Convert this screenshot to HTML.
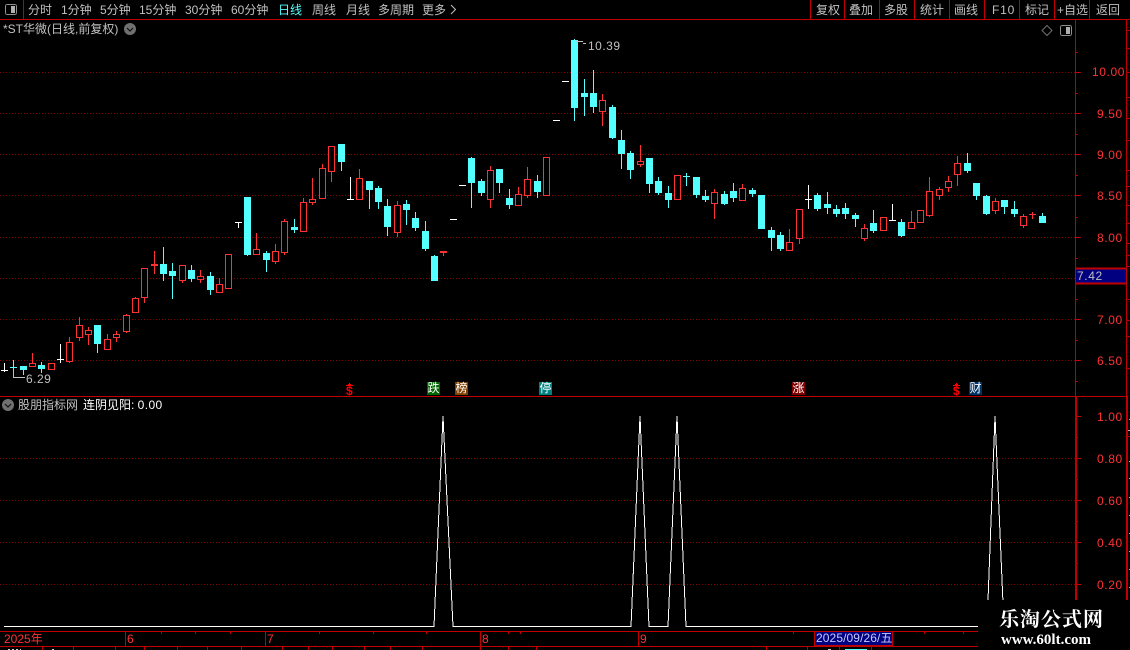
<!DOCTYPE html>
<html><head><meta charset="utf-8"><style>
html,body{margin:0;padding:0;background:#000}
#p{position:relative;width:1130px;height:650px;overflow:hidden;background:#000;font:12px/14px "Liberation Sans","WenQuanYi Zen Hei","Noto Sans CJK SC",sans-serif;color:#c0c0c0}
#p span{position:absolute;white-space:nowrap}
svg{position:absolute;left:0;top:0}
.t{top:3px}
.y{color:#ff3232;left:1092px;letter-spacing:.6px}
.m{width:13px;height:13px;top:382px;color:#fff;text-align:center;line-height:13px}
.d{color:#ff3232;top:632px}
.s{color:#f00;font:bold 12px/12px "Liberation Sans",sans-serif;top:385px}
</style></head><body><div id="p">
<svg width="1130" height="650" shape-rendering="crispEdges" fill="none">
<g stroke="#8a0000" stroke-dasharray="1 2">
<path d="M0 72.5H1075M0 113.5H1075M0 154.5H1075M0 195.5H1075M0 237.5H1075M0 278.5H1075M0 319.5H1075M0 360.5H1075M0 458.5H1075M0 500.5H1075M0 542.5H1075M0 584.5H1075"/>
</g>
<g stroke="#c00000">
<path d="M0 19.5H1130M0 396.5H1126M23.5 0V19M810.5 0V19M844.5 0V19M879.5 0V19M914.5 0V19M949.5 0V19M984.5 0V19M1019.5 0V19M1054.5 0V19M1089.5 0V19"/>
<path d="M1075.5 20V600M1126.5 20V600"/>
<path d="M1076.5 396V600M1127.5 396V600"/>
<path d="M1075 72.5h6M1075 113.5h6M1075 154.5h6M1075 195.5h6M1075 237.5h6M1075 319.5h6M1075 360.5h6M1075 416.5h6M1075 458.5h6M1075 500.5h6M1075 542.5h6M1075 584.5h6"/>
<path d="M1075 52.5h3M1075 93.5h3M1075 134.5h3M1075 175.5h3M1075 217.5h3M1075 258.5h3M1075 299.5h3M1075 340.5h3M1075 381.5h3M1075 437.5h3M1075 479.5h3M1075 521.5h3M1075 563.5h3"/>
<path d="M1127 30.5h3M1127 48.5h3M1127 72.5h3M1127 97.5h3M1127 118.5h3M1127 140.5h3M1127 170.5h3M1127 186.5h3M1127 205.5h3M1127 223.5h3M1127 243.5h3M1127 255.5h3M1127 266.5h3M1127 299.5h3M1127 320.5h3M1127 336.5h3M1127 368.5h3M1127 436.5h3"/>
<path d="M0 631.5H978M0 646.5H978M125.5 631V646M265.5 631V646M480.5 631V646M638.5 631V646M161.5 631v3M195.5 631v3M230.5 631v3M319.5 631v3M373.5 631v3M426.5 631v3M508.5 631v3M520.5 631v3M793.5 631v3M924.5 631v3M963.5 631v3M42.5 646v4M73.5 646v4M115.5 646v4M144.5 646v4M177.5 646v4M207.5 646v4M241.5 646v4M282.5 646v4M308.5 646v4M332.5 646v4M364.5 646v4M390.5 646v4M422.5 646v4M480.5 646v4M508.5 646v4M536.5 646v4M766.5 646v4M807.5 646v4M839.5 646v4M871.5 646v4"/>
</g>
<path stroke="#b0b0b0" d="M1129 419.5h1M1128 430.5h2M1129 461.5h1M1129 478.5h1M1129 497.5h1M1129 515.5h1M1129 533.5h1M1129 551.5h1M1129 569.5h1M1129 587.5h1"/>
<path stroke="#d0d0d0" d="M8 649.5h2M12 649.5h2M16 649.5h2M20 649.5h1M52 649.5h2M828 649.5h3"/>
<path stroke="#54ffff" d="M845 649.5h22"/>
<rect x="1076" y="268" width="50" height="16" fill="#000080"/>
<path d="M1075 268.5H1126M1075 283.5H1126" stroke="#c00000" stroke-width="2"/>
<!-- wicks -->
<g transform="translate(.5,0)">
<path stroke="#ff3232" d="M32 353V367M69 337V363M79 317V341M88 327V345M107 334V349M116 331V342M126 314V333M135 297V313M144 268V303M154 251V274M182 265V283M200 270V283M219 278V292M256 233V254M275 244V264M284 219V255M303 198V231M312 178V205M322 164V198M331 146V182M359 169V199M397 201V237M443 251V256M490 166V208M518 187V205M527 167V198M602 94V126M640 145V167M714 189V219M742 184V201M789 229V251M799 209V244M864 224V241M883 217V231M911 211V228M920 210V223M929 177V217M939 187V200M948 176V192M957 156V186M995 198V214M1023 214V228M1032 212V219"/>
<path stroke="#54ffff" d="M13 360V378M23 366V375M41 362V373M97 325V353M163 247V281M172 263V299M191 265V282M210 272V295M247 197V256M266 251V272M294 219V233M341 144V171M369 181V209M378 186V209M387 199V236M406 200V225M415 212V231M425 221V251M434 255V281M471 157V208M481 179V196M499 169V193M509 189V209M537 175V198M574 39V121M584 79V116M593 70V113M612 105V139M621 130V169M630 151V179M649 158V193M658 177V195M668 186V208M686 173V186M696 177V198M705 190V202M724 191V205M733 183V202M752 188V197M771 227V251M780 232V251M817 193V211M827 192V214M836 205V217M845 203V219M855 213V227M873 210V233M901 219V237M967 153V173M976 183V200M986 195V215M1004 200V214M1014 201V217M1042 213V223"/>
<path stroke="#fff" d="M4 363V372M60 344V363M238 222V228M350 177V200M808 185V209M892 204V221"/>
</g>
<!-- red outlined bodies -->
<g transform="translate(-2.5,.5)" fill="#000" stroke="#ff3232">
<path d="M32 363h6V366h-6zM51 363h6V369h-6zM69 342h6V361h-6zM79 325h6V337h-6zM88 330h6V334h-6zM107 339h6V349h-6zM116 334h6V337h-6zM126 315h6V331h-6zM135 298h6V312h-6zM144 268h6V297h-6zM154 264h6V265h-6zM182 265h6V280h-6zM200 276h6V279h-6zM219 284h6V292h-6zM228 254h6V288h-6zM256 249h6V254h-6zM275 251h6V261h-6zM284 221h6V252h-6zM303 202h6V231h-6zM312 199h6V202h-6zM322 168h6V198h-6zM331 146h6V171h-6zM359 178h6V199h-6zM397 205h6V232h-6zM443 251h6V252h-6zM490 170h6V199h-6zM518 194h6V205h-6zM527 179h6V195h-6zM546 157h6V195h-6zM602 100h6V111h-6zM640 161h6V164h-6zM677 175h6V199h-6zM714 192h6V203h-6zM742 188h6V200h-6zM789 242h6V250h-6zM799 209h6V238h-6zM864 228h6V238h-6zM883 217h6V230h-6zM911 222h6V228h-6zM920 210h6V222h-6zM929 191h6V215h-6zM939 189h6V195h-6zM948 181h6V187h-6zM957 163h6V174h-6zM995 201h6V210h-6zM1023 216h6V225h-6z"/>
</g>
<path stroke="#ff3232" d="M1029 214.5h7"/>
<!-- cyan filled bodies -->
<g transform="translate(-3,0)" fill="#54ffff">
<path d="M23 366h7V370h-7zM41 365h7V369h-7zM97 325h7V344h-7zM163 264h7V274h-7zM172 271h7V276h-7zM191 270h7V279h-7zM210 276h7V290h-7zM247 197h7V255h-7zM266 253h7V260h-7zM294 227h7V230h-7zM341 144h7V162h-7zM369 181h7V190h-7zM378 188h7V202h-7zM387 206h7V227h-7zM406 204h7V210h-7zM415 218h7V228h-7zM425 231h7V249h-7zM434 256h7V281h-7zM471 158h7V183h-7zM481 181h7V193h-7zM499 169h7V183h-7zM509 198h7V205h-7zM537 181h7V192h-7zM574 40h7V108h-7zM584 93h7V97h-7zM593 93h7V107h-7zM612 107h7V138h-7zM621 140h7V154h-7zM630 153h7V170h-7zM649 158h7V184h-7zM658 181h7V193h-7zM668 193h7V200h-7zM696 177h7V195h-7zM705 196h7V200h-7zM724 194h7V204h-7zM733 191h7V198h-7zM752 190h7V194h-7zM761 195h7V229h-7zM771 230h7V238h-7zM780 235h7V249h-7zM817 195h7V209h-7zM827 204h7V208h-7zM836 209h7V214h-7zM845 208h7V214h-7zM855 215h7V219h-7zM873 223h7V231h-7zM901 222h7V236h-7zM967 163h7V171h-7zM976 183h7V196h-7zM986 196h7V214h-7zM1004 200h7V207h-7zM1014 209h7V214h-7zM1042 216h7V223h-7z"/>
</g>
<path stroke="#54ffff" d="M10 367.5h7M683 176.5h7"/>
<path stroke="#fff" d="M1 370.5h7M57 359.5h7M235 222.5h7M347 199.5h7M450 219.5h7M459 185.5h7M553 120.5h7M562 81.5h7M805 199.5h7M889 220.5h7"/>
<!-- labels arrows -->
<path stroke="#c0c0c0" d="M13.5 370V378M14 377.5H25M576 41.5h7M583 43.5h3"/>
<!-- indicator -->
<path stroke="#fff" d="M4 626.5H434L443 416L453 626.5H631L640 416L649 626.5H668L677 416L686 626.5H987L995 416L1004 626.5H1010"/>
<!-- $ arrows -->
<path fill="#f00" d="M349 383h1v1h1v1h2v1h-7v-1h2v-1h1zM956 383h1v1h1v1h2v1h-7v-1h2v-1h1z"/>
<!-- icons -->
<rect x="5.5" y="4.5" width="11" height="10" rx="2" stroke="#909090"/>
<rect x="11" y="6" width="4" height="7" fill="#b0b0b0"/>
<rect x="1060.5" y="25.5" width="11" height="10" rx="2" stroke="#909090"/>
<rect x="1066" y="27" width="4" height="7" fill="#b0b0b0"/>
</svg>
<svg width="1130" height="650" fill="none">
<path d="M1047 25.5L1052 30.5L1047 35.5L1042 30.5Z" stroke="#707070"/>
<path d="M451 5L455.5 9.5L451 14" stroke="#c0c0c0"/>
<circle cx="130" cy="29" r="6" fill="#707070"/><path d="M127 28l3 3 3-3" stroke="#111" stroke-width="1.2"/>
<circle cx="8" cy="405" r="6" fill="#707070"/><path d="M5 404l3 3 3-3" stroke="#111" stroke-width="1.2"/>
</svg>

<span class="t" style="left:28px">分时</span>
<span class="t" style="left:61px">1分钟</span>
<span class="t" style="left:100px">5分钟</span>
<span class="t" style="left:139px">15分钟</span>
<span class="t" style="left:185px">30分钟</span>
<span class="t" style="left:231px">60分钟</span>
<span class="t" style="left:278px;color:#54ffff">日线</span>
<span class="t" style="left:312px">周线</span>
<span class="t" style="left:346px">月线</span>
<span class="t" style="left:378px">多周期</span>
<span class="t" style="left:422px">更多</span>
<span class="t" style="left:816px">复权</span>
<span class="t" style="left:849px">叠加</span>
<span class="t" style="left:884px">多股</span>
<span class="t" style="left:920px">统计</span>
<span class="t" style="left:954px">画线</span>
<span class="t" style="left:992px;letter-spacing:.8px">F10</span>
<span class="t" style="left:1025px">标记</span>
<span class="t" style="left:1057px">+自选</span>
<span class="t" style="left:1096px">返回</span>
<span style="left:3px;top:22px">*ST华微(日线,前复权)</span>

<span style="left:588px;top:39px;letter-spacing:.5px">10.39</span>
<span style="left:26px;top:372px;letter-spacing:.5px">6.29</span>

<span class="y" style="top:65px">10.00</span>
<span class="y" style="top:107px;left:1097px">9.50</span>
<span class="y" style="top:148px;left:1097px">9.00</span>
<span class="y" style="top:189px;left:1097px">8.50</span>
<span class="y" style="top:231px;left:1097px">8.00</span>
<span class="y" style="top:313px;left:1097px">7.00</span>
<span class="y" style="top:354px;left:1097px">6.50</span>
<span style="left:1077px;top:269px;letter-spacing:.6px;color:#c0c0c0">7.42</span>
<span class="y" style="top:410px;left:1097px">1.00</span>
<span class="y" style="top:452px;left:1097px">0.80</span>
<span class="y" style="top:494px;left:1097px">0.60</span>
<span class="y" style="top:536px;left:1097px">0.40</span>
<span class="y" style="top:578px;left:1097px">0.20</span>

<span class="s" style="left:346px">$</span>
<span class="s" style="left:953px">$</span>
<span class="m" style="left:427px;background:#006600">跌</span>
<span class="m" style="left:455px;background:#804000">榜</span>
<span class="m" style="left:539px;background:#008080">停</span>
<span class="m" style="left:792px;background:#800000">涨</span>
<span class="m" style="left:969px;background:#003366">财</span>

<span style="left:18px;top:398px">股朋指标网</span>
<span style="left:83px;top:398px;color:#fff">连阴见阳: <span style="position:static;letter-spacing:.4px">0.00</span></span>

<span class="d" style="left:4px">2025年</span>
<span class="d" style="left:127px">6</span>
<span class="d" style="left:267px">7</span>
<span class="d" style="left:482px">8</span>
<span class="d" style="left:640px">9</span>
<span style="left:814px;top:631px;width:79px;height:15px;background:#000080;box-sizing:border-box;border:1px solid #c00000;color:#c8c8ff;line-height:13px;padding-left:1px;letter-spacing:.1px">2025/09/26/五</span>

<div style="position:absolute;left:978px;top:600px;width:152px;height:50px;background:#000"></div>
<span style="left:999px;top:609px;color:#fff;font:bold 20px/22px 'Liberation Serif','Noto Serif CJK SC',serif;letter-spacing:1px">乐淘公式网</span>
<span style="left:1001px;top:632px;color:#fff;font:bold 15px/16px 'Liberation Serif',serif">www.60lt.com</span>
</div></body></html>
